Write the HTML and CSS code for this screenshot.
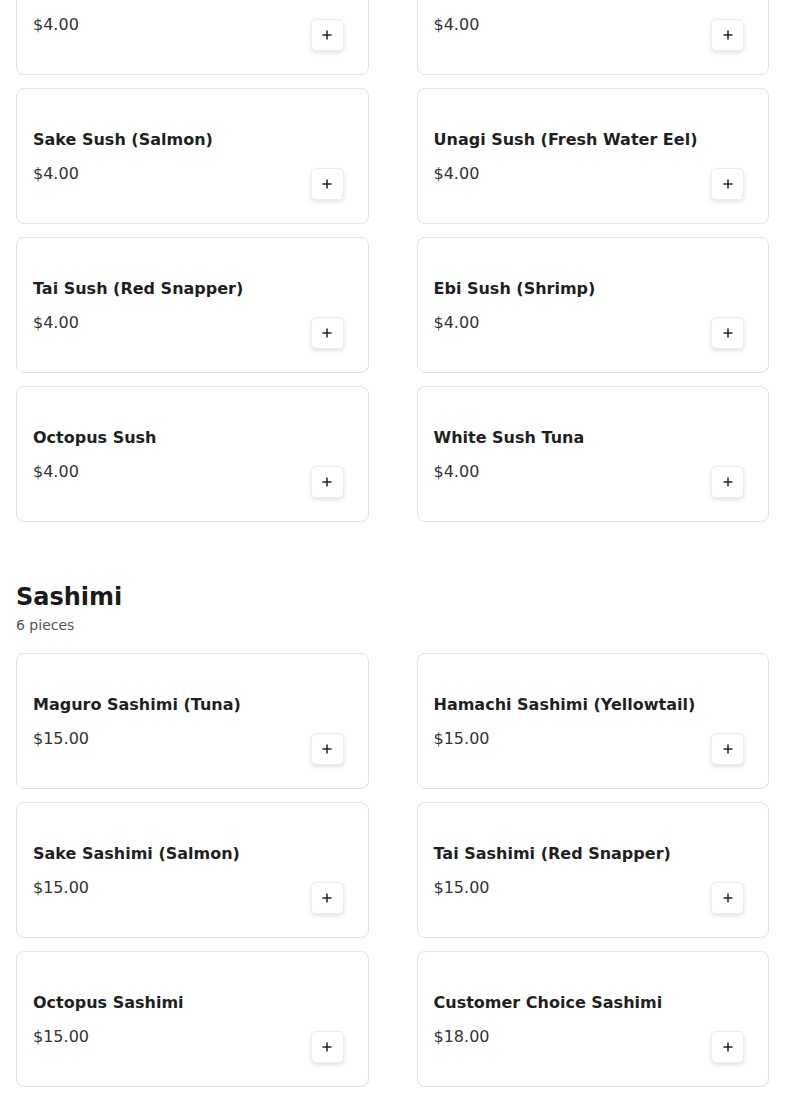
FILE: index.html
```html
<!DOCTYPE html>
<html lang="en">
<head>
<meta charset="utf-8">
<title>Menu</title>
<link rel="stylesheet" href="styles.css">
</head>
<body>
<main class="menu">
  <section class="section section-first">
    <div class="grid">
      <div class="card"><div class="info"><h3 class="name">&nbsp;</h3><p class="price">$4.00</p></div><button class="add" aria-label="Add"><svg viewBox="0 0 10 10" width="10" height="10"><path d="M5 0.5V9.5M0.5 5H9.5" stroke="#222" stroke-width="1.5" fill="none"/></svg></button></div>
      <div class="card"><div class="info"><h3 class="name">&nbsp;</h3><p class="price">$4.00</p></div><button class="add" aria-label="Add"><svg viewBox="0 0 10 10" width="10" height="10"><path d="M5 0.5V9.5M0.5 5H9.5" stroke="#222" stroke-width="1.5" fill="none"/></svg></button></div>
      <div class="card"><div class="info"><h3 class="name">Sake Sush (Salmon)</h3><p class="price">$4.00</p></div><button class="add" aria-label="Add"><svg viewBox="0 0 10 10" width="10" height="10"><path d="M5 0.5V9.5M0.5 5H9.5" stroke="#222" stroke-width="1.5" fill="none"/></svg></button></div>
      <div class="card"><div class="info"><h3 class="name">Unagi Sush (Fresh Water Eel)</h3><p class="price">$4.00</p></div><button class="add" aria-label="Add"><svg viewBox="0 0 10 10" width="10" height="10"><path d="M5 0.5V9.5M0.5 5H9.5" stroke="#222" stroke-width="1.5" fill="none"/></svg></button></div>
      <div class="card"><div class="info"><h3 class="name">Tai Sush (Red Snapper)</h3><p class="price">$4.00</p></div><button class="add" aria-label="Add"><svg viewBox="0 0 10 10" width="10" height="10"><path d="M5 0.5V9.5M0.5 5H9.5" stroke="#222" stroke-width="1.5" fill="none"/></svg></button></div>
      <div class="card"><div class="info"><h3 class="name">Ebi Sush (Shrimp)</h3><p class="price">$4.00</p></div><button class="add" aria-label="Add"><svg viewBox="0 0 10 10" width="10" height="10"><path d="M5 0.5V9.5M0.5 5H9.5" stroke="#222" stroke-width="1.5" fill="none"/></svg></button></div>
      <div class="card"><div class="info"><h3 class="name">Octopus Sush</h3><p class="price">$4.00</p></div><button class="add" aria-label="Add"><svg viewBox="0 0 10 10" width="10" height="10"><path d="M5 0.5V9.5M0.5 5H9.5" stroke="#222" stroke-width="1.5" fill="none"/></svg></button></div>
      <div class="card"><div class="info"><h3 class="name">White Sush Tuna</h3><p class="price">$4.00</p></div><button class="add" aria-label="Add"><svg viewBox="0 0 10 10" width="10" height="10"><path d="M5 0.5V9.5M0.5 5H9.5" stroke="#222" stroke-width="1.5" fill="none"/></svg></button></div>
    </div>
  </section>
  <section class="section">
    <h2 class="section-title">Sashimi</h2>
    <p class="section-sub">6 pieces</p>
    <div class="grid">
      <div class="card"><div class="info"><h3 class="name">Maguro Sashimi (Tuna)</h3><p class="price">$15.00</p></div><button class="add" aria-label="Add"><svg viewBox="0 0 10 10" width="10" height="10"><path d="M5 0.5V9.5M0.5 5H9.5" stroke="#222" stroke-width="1.5" fill="none"/></svg></button></div>
      <div class="card"><div class="info"><h3 class="name">Hamachi Sashimi (Yellowtail)</h3><p class="price">$15.00</p></div><button class="add" aria-label="Add"><svg viewBox="0 0 10 10" width="10" height="10"><path d="M5 0.5V9.5M0.5 5H9.5" stroke="#222" stroke-width="1.5" fill="none"/></svg></button></div>
      <div class="card"><div class="info"><h3 class="name">Sake Sashimi (Salmon)</h3><p class="price">$15.00</p></div><button class="add" aria-label="Add"><svg viewBox="0 0 10 10" width="10" height="10"><path d="M5 0.5V9.5M0.5 5H9.5" stroke="#222" stroke-width="1.5" fill="none"/></svg></button></div>
      <div class="card"><div class="info"><h3 class="name">Tai Sashimi (Red Snapper)</h3><p class="price">$15.00</p></div><button class="add" aria-label="Add"><svg viewBox="0 0 10 10" width="10" height="10"><path d="M5 0.5V9.5M0.5 5H9.5" stroke="#222" stroke-width="1.5" fill="none"/></svg></button></div>
      <div class="card"><div class="info"><h3 class="name">Octopus Sashimi</h3><p class="price">$15.00</p></div><button class="add" aria-label="Add"><svg viewBox="0 0 10 10" width="10" height="10"><path d="M5 0.5V9.5M0.5 5H9.5" stroke="#222" stroke-width="1.5" fill="none"/></svg></button></div>
      <div class="card"><div class="info"><h3 class="name">Customer Choice Sashimi</h3><p class="price">$18.00</p></div><button class="add" aria-label="Add"><svg viewBox="0 0 10 10" width="10" height="10"><path d="M5 0.5V9.5M0.5 5H9.5" stroke="#222" stroke-width="1.5" fill="none"/></svg></button></div>
    </div>
  </section>
</main>
</body>
</html>
```
FILE: styles.css
```css
html, body {
  margin: 0;
  padding: 0;
  background: #ffffff;
}
body {
  font-family: "DejaVu Sans", sans-serif;
  color: #222222;
  overflow: hidden;
}
.menu {
  padding: 0 16px;
  margin-top: -61px;
}
.section {
  margin-bottom: 57px;
}
.section-title {
  margin: 0;
  font-size: 24px;
  line-height: 36px;
  font-weight: 700;
  color: #1a1a1a;
}
.section-sub {
  margin: 0 0 17px;
  font-size: 14px;
  line-height: 21px;
  color: #555555;
}
.grid {
  display: grid;
  grid-template-columns: 1fr 1fr;
  column-gap: 48px;
  row-gap: 13px;
}
.card {
  display: flex;
  align-items: center;
  height: 136px;
  box-sizing: border-box;
  padding: 16px;
  border: 1px solid #e2e2e2;
  border-radius: 8px;
  background: #ffffff;
}
.info {
  flex: 1;
  display: flex;
  flex-direction: column;
  gap: 10px;
  margin-top: 1px;
}
.name {
  margin: 0;
  font-size: 16px;
  line-height: 24px;
  font-weight: 700;
  color: #1f1f1f;
}
.price {
  margin: 0;
  font-size: 16px;
  line-height: 24px;
  color: #333333;
}
.add {
  align-self: flex-end;
  margin: 0 8px 7px 0;
  width: 33px;
  height: 32px;
  padding: 0;
  display: flex;
  align-items: center;
  justify-content: center;
  background: #ffffff;
  border: 1px solid #ececec;
  border-radius: 5px;
  box-shadow: 0 2px 4px rgba(0, 0, 0, 0.12);
  cursor: pointer;
}
.add svg {
  display: block;
}
```
